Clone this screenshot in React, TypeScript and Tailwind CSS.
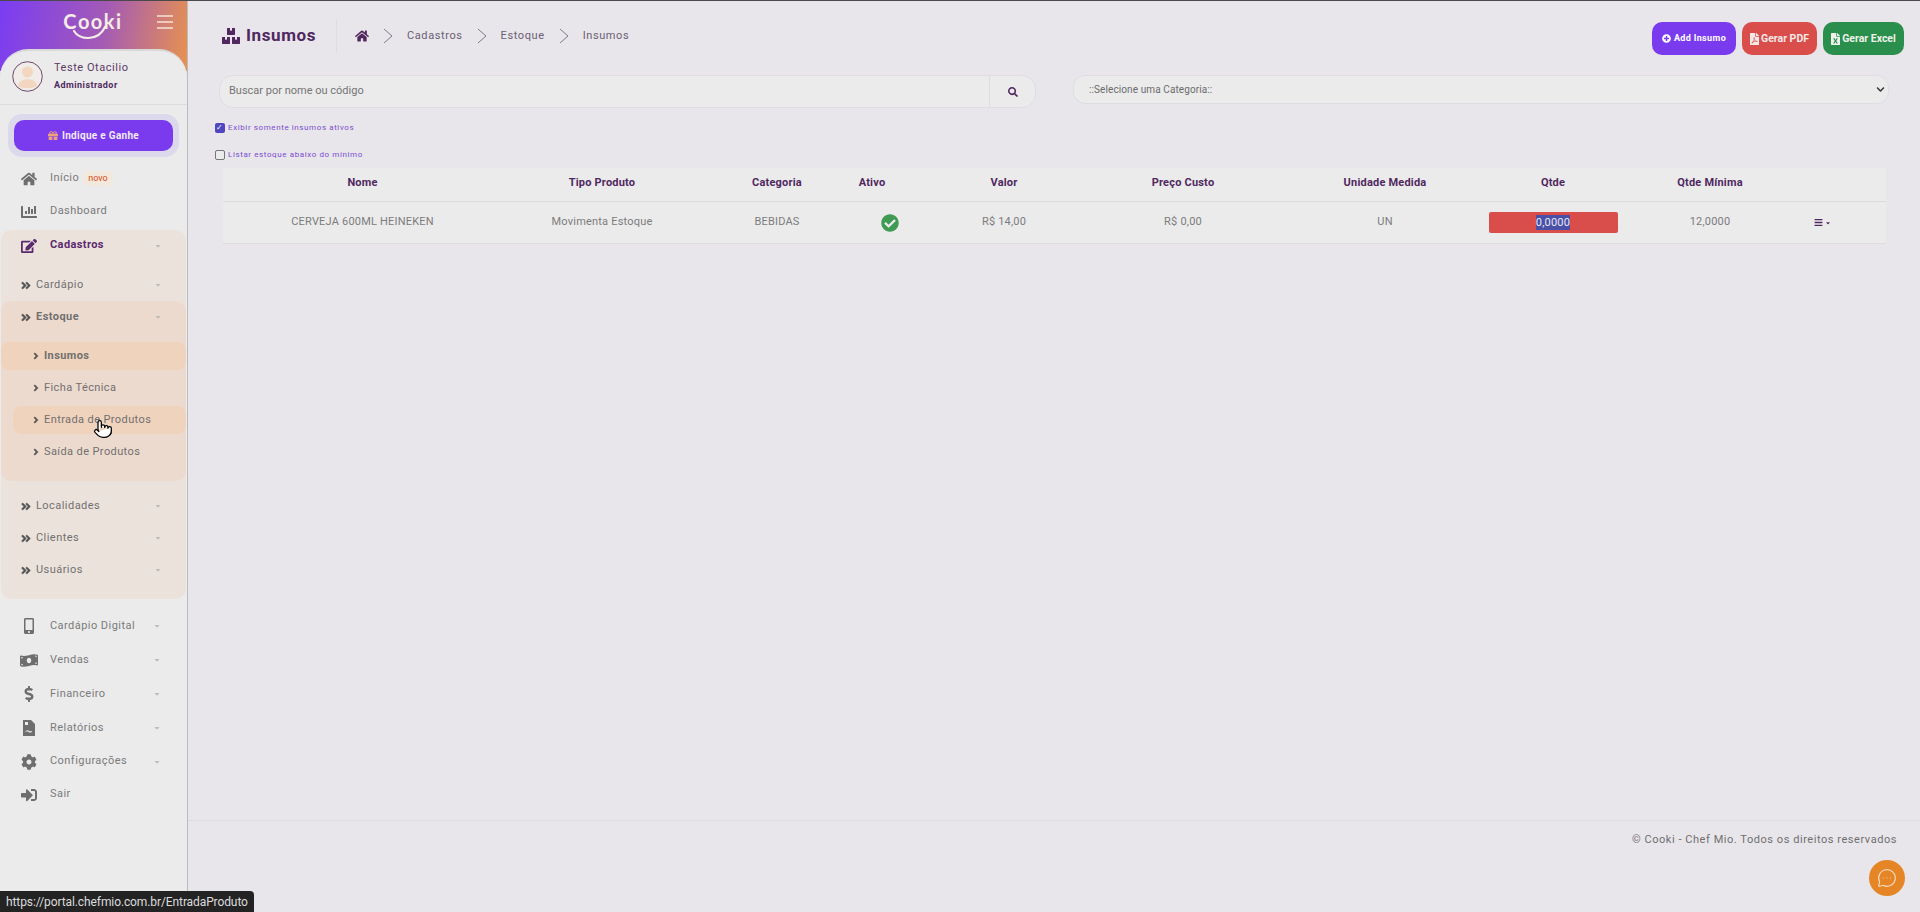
import React from 'react';
import { MessageCircleMore, Pointer } from 'lucide-react';
import {
  FaAngleDoubleRight, FaAngleRight, FaBoxes, FaCaretDown, FaChartBar, FaBars, FaCheckCircle, FaChevronDown, FaCog, FaDollarSign,
  FaEdit, FaFileExcel, FaFilePdf, FaGift, FaHome, FaMobileAlt, FaMoneyBillWave, FaPlusCircle, FaSearch, FaSignInAlt,
} from 'react-icons/fa';

const Caret = () => <FaCaretDown className="absolute left-[153px] top-1/2 -translate-y-1/2 w-2 h-2 text-[#bdbdbd]" />;

const ReportIcon: React.FC<{ className?: string }> = ({ className }) => (
  <svg viewBox="0 0 14 16" className={className} fill="currentColor">
    <path d="M1 0h8l4 4v12H1zM3 2v3h3V2zM3.500 12.500c1-1.500 2-1.500 3-.5s2 .5 3.500 0v-1c-1.500.5-2 .5-3-.3s-2.500-.7-3.500.8z" fillRule="evenodd" />
  </svg>
);

const TopItem: React.FC<{ icon: React.ElementType; label: string; caret?: boolean; h?: string; iconClass?: string }> = ({ icon: Icon, label, caret, h = 'h-[34px]', iconClass = 'w-[16px] h-[16px]' }) => (
  <div className={`relative flex items-center ${h} pl-5 text-[11px] tracking-[0.45px] text-[#7a7a7a]`}>
    <span className="w-[18px] flex justify-center"><Icon className={`${iconClass} shrink-0 text-[#6e6e6e]`} /></span>
    <span className="ml-[12px]">{label}</span>
    {caret && <Caret />}
  </div>
);

const SubItem: React.FC<{ label: string; bold?: boolean }> = ({ label, bold }) => (
  <div className={`relative flex items-center h-8 pl-5 text-[11px] tracking-[0.45px] text-[#707070] ${bold ? 'font-bold' : ''}`}>
    <FaAngleDoubleRight className="w-[10px] h-[11px] text-[#555] stroke-current stroke-[25]" />
    <span className="ml-[5px]">{label}</span>
    <Caret />
  </div>
);

const LeafItem: React.FC<{ label: string; className?: string }> = ({ label, className = 'pl-[31px]' }) => (
  <div className={`flex items-center h-7 text-[11px] tracking-[0.4px] text-[#707070] rounded-[8px] ${className}`}>
    <FaAngleRight className="w-[8px] h-[10px] text-[#555] stroke-current stroke-[20]" />
    <span className="ml-[4px]">{label}</span>
  </div>
);

const Sidebar = () => (
  <aside className="w-[188px] shrink-0 h-full flex flex-col bg-[linear-gradient(100deg,#7a3cf3_0%,#a45bb4_55%,#e8924f_100%)] bg-no-repeat bg-[length:100%_70px] border-r border-[#bcbcbf]">
    <div className="h-12 shrink-0 relative flex items-center justify-center">
      <div className="relative ml-[-1px] -mt-[8px]">
        <span className="font-['Lato',sans-serif] font-bold text-[20px] tracking-[1.5px] text-[#f6ece8]">Cooki</span>
        <svg className="absolute left-[6px] top-[16px]" width="44" height="22" viewBox="0 0 44 22" fill="none">
          <path d="M5 9c5 9 24 11 31-4" stroke="#f6ece8" strokeWidth="2.2" strokeLinecap="round" />
        </svg>
      </div>
      <svg className="absolute right-[14px] top-[14px]" width="16" height="14" viewBox="0 0 16 14" fill="none" stroke="#f6e2d8" strokeWidth="1.3">
        <path d="M0 1h16M0 7h16M0 13h16" />
      </svg>
    </div>
    <div className="flex-1 bg-[#ebebeb] rounded-t-[28px] border-t-2 border-[#d9d9d9] flex flex-col">
      <div className="h-[54px] pb-[2px] flex items-center pl-3 border-b border-[#dcdcdc]">
        <svg width="31" height="31" viewBox="0 0 31 31" className="shrink-0">
          <circle cx="15.5" cy="15.5" r="14.8" fill="#f1ece8" stroke="#6a4a70" strokeWidth="1" />
          <circle cx="15.5" cy="11" r="5.5" fill="#f2d6bf" />
          <path d="M6 25c0-9 19-9 19 0-5 3-14 3-19 0z" fill="#f2d6bf" />
        </svg>
        <div className="ml-[11px]">
          <div className="text-[11px] tracking-[0.55px] leading-[16px] text-[#5b3a66]">Teste Otacilio</div>
          <div className="text-[9px] tracking-[0.45px] font-bold leading-[18px] text-[#4f2a60]">Administrador</div>
        </div>
      </div>
      <div className="mx-2 mt-[9px] p-[6px] rounded-[14px] bg-[#dcd9ec]">
        <div className="h-[31px] rounded-[10px] bg-[#7a3bef] flex items-center justify-center gap-1 text-[10px] font-bold tracking-[0.3px] text-[#f3eaf3]">
          <FaGift className="w-[10px] h-[11px] text-[#eda27b]" />
          Indique e Ganhe
        </div>
      </div>
      <div className="mt-[5px] flex flex-col">
        <div className="relative flex items-center h-[33px] pl-5 text-[11px] tracking-[0.45px] text-[#7a7a7a]">
          <span className="w-[18px] flex justify-center"><FaHome className="w-[16px] h-[16px] text-[#6e6e6e]" /></span>
          <span className="ml-[12px]">Início</span>
          <span className="ml-1 px-[5px] h-[15px] flex items-center rounded-[6px] bg-[#f3e8dc] text-[9px] tracking-normal text-[#d84a1b]">novo</span>
        </div>
        <TopItem icon={FaChartBar} label="Dashboard" h="h-[33px]" />
      </div>
      <div className="mt-[2px] mx-px pb-[13px] rounded-[10px] bg-[#ece2dc]">
        <div className="relative flex items-center h-[31px] pl-[19px] text-[11px] tracking-[0.4px] font-bold text-[#5b2a6e]">
          <span className="w-[18px] flex justify-center"><FaEdit className="w-[16px] h-[16px] text-[#5b2a6e]" /></span>
          <span className="ml-[12px]">Cadastros</span>
          <Caret />
        </div>
        <div className="mt-[8px]"><SubItem label="Cardápio" /></div>
        <div className="h-[180px] rounded-[10px] bg-[#eddace]">
          <SubItem label="Estoque" bold />
          <div className="mt-[9px] flex flex-col gap-1">
            <LeafItem label="Insumos" className="pl-[31px] font-bold bg-[#f0d3bd]" />
            <LeafItem label="Ficha Técnica" />
            <LeafItem label="Entrada de Produtos" className="ml-3 pl-[19px] bg-[#f0d3bd]" />
            <LeafItem label="Saída de Produtos" />
          </div>
        </div>
        <div className="mt-[9px]">
          <SubItem label="Localidades" />
          <SubItem label="Clientes" />
          <SubItem label="Usuários" />
        </div>
      </div>
      <div className="mt-[10px] flex flex-col">
        <TopItem icon={FaMobileAlt} label="Cardápio Digital" caret />
        <TopItem icon={FaMoneyBillWave} label="Vendas" caret iconClass="w-[18px] h-[15px]" />
        <TopItem icon={FaDollarSign} label="Financeiro" caret />
        <TopItem icon={ReportIcon} label="Relatórios" caret />
        <TopItem icon={FaCog} label="Configurações" caret h="h-[33px]" />
        <TopItem icon={FaSignInAlt} label="Sair" h="h-[33px]" />
      </div>
    </div>
  </aside>
);

const Chevron = () => (
  <svg width="10" height="16" viewBox="0 0 10 16" fill="none" className="mx-[14px]">
    <path d="M1 1l8 7-8 7" stroke="#6a5a70" strokeWidth="0.8" />
  </svg>
);

const gridCols = 'grid grid-cols-[279px_200px_150px_40px_224px_134px_230px_146px_168px_56px_36px] items-center text-center';

const headers = ['Nome', 'Tipo Produto', 'Categoria', 'Ativo', 'Valor', 'Preço Custo', 'Unidade Medida', 'Qtde', 'Qtde Mínima', ''];

export default function App() {
  return (
    <div className="relative flex h-screen w-full overflow-hidden bg-[#e8e6eb] border-t border-[#4a4a4a] font-['Roboto',sans-serif]">
      <Sidebar />
      <main className="flex-1 min-w-0 flex flex-col">
        <div className="h-[74px] shrink-0 flex items-start pl-[34px] pr-4">
          <div className="mt-[18px] h-[34px] flex items-center pr-[20px] border-r border-[#dfdde3]">
            <FaBoxes className="w-[18px] h-[16px] text-[#50285f]" />
            <span className="ml-[6px] text-[17px] font-bold tracking-[0.6px] text-[#50285f]">Insumos</span>
          </div>
          <div className="mt-[18px] h-[34px] flex items-center pl-[18px] text-[11px] tracking-[0.6px] text-[#6a6072]">
            <FaHome className="w-[14px] h-[14px] text-[#50285f]" />
            <Chevron />
            <span>Cadastros</span>
            <Chevron />
            <span>Estoque</span>
            <Chevron />
            <span>Insumos</span>
          </div>
          <div className="ml-auto mt-[21px] flex gap-[6px]">
            <div className="h-[33px] w-[84px] rounded-[10px] bg-[#7a3bef] text-white text-[9px] font-bold tracking-[0.35px] flex items-center justify-center gap-[3px]">
              <FaPlusCircle className="w-[9px] h-[9px]" />Add Insumo
            </div>
            <div className="h-[33px] w-[75px] rounded-[10px] bg-[#d94e4a] text-[#f4e9e6] text-[10.5px] font-bold flex items-center justify-center gap-[2px]">
              <FaFilePdf className="w-[9px] h-[12px]" />Gerar PDF
            </div>
            <div className="h-[33px] w-[81px] rounded-[10px] bg-[#2a8f4c] text-[#eef2ea] text-[10.5px] font-bold flex items-center justify-center gap-[2px]">
              <FaFileExcel className="w-[9px] h-[12px]" />Gerar Excel
            </div>
          </div>
        </div>
        <div className="ml-[31px] mr-4 flex items-start">
          <div className="w-[817px] h-[33px] flex rounded-[14px] border border-[#dfdde3] bg-[#ebebec]">
            <div className="flex-1 flex items-center pl-[9px] text-[11px] text-[#757575]">Buscar por nome ou código</div>
            <div className="w-[46px] flex items-center justify-center border-l border-[#dfdde3]">
              <FaSearch className="w-[10px] h-[10px] text-[#50285f]" />
            </div>
          </div>
          <div className="ml-[37px] w-[816px] h-[29px] flex items-center justify-between pl-[15px] pr-[3px] rounded-[12px] border border-[#dfdde3] bg-[#ebebec] text-[10px] tracking-[0.1px] text-[#6b6b6b]">
            ::Selecione uma Categoria::
            <FaChevronDown className="w-[9px] h-[9px] text-[#333]" />
          </div>
        </div>
        <div className="ml-[27px] mt-[15px] flex flex-col gap-[17px] text-[8px] tracking-[0.6px] text-[#7a4bd0]">
          <div className="h-[10px] flex items-center gap-[3px]">
            <span className="w-[10px] h-[10px] rounded-[2px] bg-[#4f46c0] flex items-center justify-center text-[8px] leading-none text-white">✓</span>
            Exibir somente insumos ativos
          </div>
          <div className="h-[10px] flex items-center gap-[3px]">
            <span className="w-[10px] h-[10px] rounded-[2px] border border-[#777] bg-[#ebebec]" />
            Listar estoque abaixo do mínimo
          </div>
        </div>
        <div className="ml-[35px] mt-[8px] w-[1663px] bg-[#ebebec]">
          <div className={`${gridCols} h-[34px] pb-[2px] border-b border-[#dcdcdc] text-[11px] tracking-[0.2px] font-bold text-[#50285f]`}>
            {headers.map((h, i) => (
              <div key={i} className={i === 6 ? 'pl-10' : ''}>{h}</div>
            ))}
          </div>
          <div className={`${gridCols} h-[42px] border-b border-[#dcdcdc] text-[11px] tracking-[0.2px] text-[#7c7c7c]`}>
            <div>CERVEJA 600ML HEINEKEN</div>
            <div>Movimenta Estoque</div>
            <div>BEBIDAS</div>
            <div className="flex justify-center"><FaCheckCircle className="ml-[36px] w-[18px] h-[18px] shrink-0 text-[#3f9a52]" /></div>
            <div>R$ 14,00</div>
            <div>R$ 0,00</div>
            <div className="pl-10">UN</div>
            <div className="flex justify-center">
              <div className="w-[129px] h-[21px] rounded-[2px] bg-[#d94e4a] flex items-center justify-center">
                <span className="bg-[#4a50a8] text-[#e8e8f4] leading-[15px]">0,0000</span>
              </div>
            </div>
            <div>12,0000</div>
            <div className="flex items-center justify-center gap-[2px] text-[#50285f]">
              <FaBars className="w-[9px] h-[9px]" />
              <FaCaretDown className="w-[6px] h-[6px]" />
            </div>
          </div>
        </div>
        <div className="mt-auto mb-[64px] h-[28px] border-t border-[#dedce2] flex items-end justify-end pr-[23px] text-[11px] tracking-[0.55px] text-[#6f6f6f]">
          © Cooki - Chef Mio. Todos os direitos reservados
        </div>
      </main>
      <div className="absolute left-[1869px] top-[859px] w-9 h-9 rounded-full bg-[#e58526] flex items-center justify-center">
        <MessageCircleMore className="w-[20px] h-[20px] text-[#f5dcc0]" strokeWidth={1.4} />
      </div>
      <Pointer className="absolute left-[93px] top-[416px] w-[20px] h-[24px] fill-white text-black" strokeWidth={1.5} />
      <div className="absolute left-0 bottom-0 h-[21px] w-[254px] pl-[6px] flex items-center rounded-tr-[4px] bg-[#232324] text-[12px] tracking-[-0.1px] text-[#dcdcdc]">
        https://portal.chefmio.com.br/EntradaProduto
      </div>
    </div>
  );
}
